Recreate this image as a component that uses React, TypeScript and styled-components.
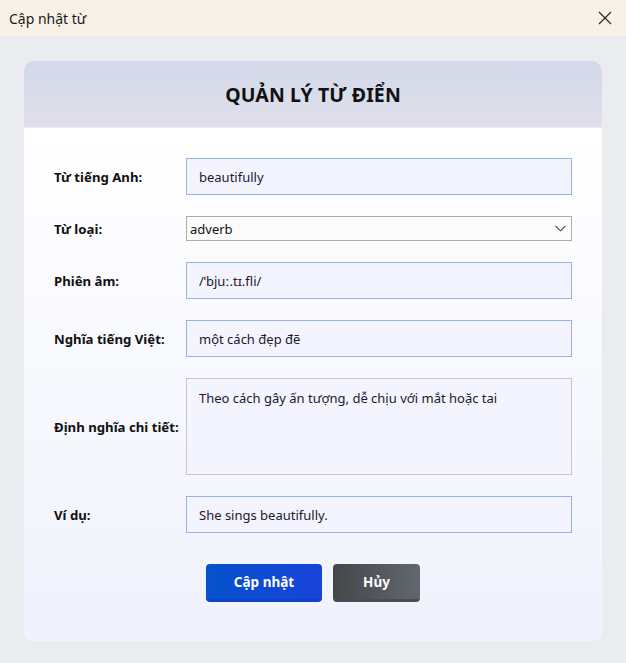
import React from 'react';
import styled, { createGlobalStyle } from 'styled-components';

const GlobalStyle = createGlobalStyle`
  html, body {
    margin: 0;
    padding: 0;
    background: #ebecf0;
  }
  * {
    box-sizing: border-box;
  }
`;

// Window frame
const Window = styled.div`
  width: 626px;
  height: 663px;
  display: flex;
  flex-direction: column;
  background: #ebecf0;
  font-family: 'Noto Sans', 'Open Sans', sans-serif;
  overflow: hidden;
`;

const TitleBar = styled.div`
  height: 36px;
  flex-shrink: 0;
  display: flex;
  align-items: center;
  justify-content: space-between;
  padding: 0 13px 0 9px;
  background: #f8f1e7;
  font-size: 14px;
  color: #1b1b1b;
`;

const CloseButton = styled.button`
  border: none;
  background: transparent;
  padding: 0;
  width: 16px;
  height: 16px;
  display: flex;
  align-items: center;
  justify-content: center;
  cursor: pointer;
`;

const Content = styled.div`
  padding: 25px 24px 0;
  display: flex;
  flex-direction: column;
`;

const HeaderCard = styled.div`
  height: 66px;
  border-radius: 10px 10px 0 0;
  background: linear-gradient(180deg, #d2d9ea 0%, #e0dfea 100%);
  display: flex;
  align-items: center;
  justify-content: center;
`;

const Heading = styled.h1`
  margin: 0;
  font-size: 19.5px;
  font-weight: 700;
  color: #111;
  letter-spacing: 0.1px;
`;

const FormCard = styled.div`
  margin-top: 1px;
  height: 513px;
  border-radius: 0 0 8px 8px;
  background: linear-gradient(180deg, #ffffff 0%, #f0f2fc 100%);
  padding: 30px 30px 0;
`;

const FormGrid = styled.div`
  display: grid;
  grid-template-columns: 132px 1fr;
  row-gap: 21px;
  align-items: center;
`;

const Label = styled.label`
  font-size: 13.2px;
  font-weight: 700;
  color: #111;
`;

const TextInput = styled.input`
  height: 37px;
  width: 100%;
  border: 1px solid #94b2e6;
  background: #f3f4fd;
  padding: 0 12px;
  font-family: inherit;
  font-size: 13px;
  color: #22182e;
  outline: none;
`;

const SelectWrap = styled.div`
  position: relative;
  height: 25px;
`;

const Select = styled.select`
  appearance: none;
  width: 100%;
  height: 25px;
  border: 1px solid #adadad;
  background: #fbfbfc;
  padding: 0 3px;
  font-family: inherit;
  font-size: 13px;
  color: #111;
  outline: none;
`;

const Chevron = styled.svg`
  position: absolute;
  right: 6px;
  top: 9px;
  pointer-events: none;
`;

const TextArea = styled.textarea`
  height: 97px;
  width: 100%;
  resize: none;
  border: 1px solid #c6c6c6;
  background: #f3f4fd;
  padding: 10px 12px;
  font-family: inherit;
  font-size: 13px;
  color: #22182e;
  outline: none;
`;

const ButtonRow = styled.div`
  margin-top: 31px;
  display: flex;
  justify-content: center;
  gap: 11px;
`;

const Button = styled.button<{ $variant: 'primary' | 'secondary' }>`
  height: 38px;
  width: ${p => (p.$variant === 'primary' ? '116px' : '87px')};
  border: none;
  border-radius: 4px;
  font-family: inherit;
  font-size: 13.5px;
  font-weight: 700;
  color: #fff;
  cursor: pointer;
  background: ${p =>
    p.$variant === 'primary'
      ? 'linear-gradient(90deg, #0552cc 0%, #1843d9 100%)'
      : 'linear-gradient(90deg, #454648 0%, #606870 100%)'};
  border-bottom: 3px solid ${p => (p.$variant === 'primary' ? '#0f41c2' : '#4a4d52')};
`;

const App: React.FC = () => {
  return (
    <>
      <GlobalStyle />
      <Window>
        <TitleBar>
          <span>Cập nhật từ</span>
          <CloseButton aria-label="Đóng">
            <svg width="14" height="14" viewBox="0 0 14 14">
              <path d="M1 1 L13 13 M13 1 L1 13" stroke="#222" strokeWidth="1.1" fill="none" />
            </svg>
          </CloseButton>
        </TitleBar>
        <Content>
          <HeaderCard>
            <Heading>QUẢN LÝ TỪ ĐIỂN</Heading>
          </HeaderCard>
          <FormCard>
            <FormGrid>
              <Label>Từ tiếng Anh:</Label>
              <TextInput defaultValue="beautifully" />

              <Label>Từ loại:</Label>
              <SelectWrap>
                <Select defaultValue="adverb">
                  <option value="noun">noun</option>
                  <option value="verb">verb</option>
                  <option value="adjective">adjective</option>
                  <option value="adverb">adverb</option>
                </Select>
                <Chevron width="11" height="7" viewBox="0 0 11 7">
                  <path d="M0.5 0.8 L5.5 5.8 L10.5 0.8" stroke="#444" strokeWidth="1.1" fill="none" />
                </Chevron>
              </SelectWrap>

              <Label>Phiên âm:</Label>
              <TextInput defaultValue="/ˈbjuː.tɪ.fli/" />

              <Label>Nghĩa tiếng Việt:</Label>
              <TextInput defaultValue="một cách đẹp đẽ" />

              <Label>Định nghĩa chi tiết:</Label>
              <TextArea defaultValue="Theo cách gây ấn tượng, dễ chịu với mắt hoặc tai" />

              <Label>Ví dụ:</Label>
              <TextInput defaultValue="She sings beautifully." />
            </FormGrid>
            <ButtonRow>
              <Button $variant="primary">Cập nhật</Button>
              <Button $variant="secondary">Hủy</Button>
            </ButtonRow>
          </FormCard>
        </Content>
      </Window>
    </>
  );
};

export default App;
